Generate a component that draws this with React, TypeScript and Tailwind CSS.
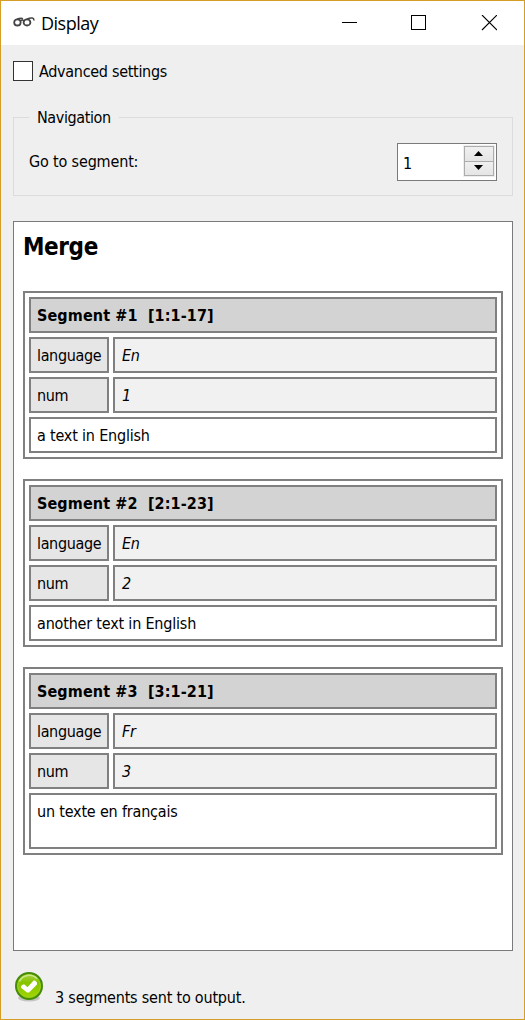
import React from 'react';

type Segment = {
  id: number;
  address: string;
  language: string;
  num: string;
  text: string;
  tall?: boolean;
};

const segments: Segment[] = [
  { id: 1, address: '[1:1-17]', language: 'En', num: '1', text: 'a text in English' },
  { id: 2, address: '[2:1-23]', language: 'En', num: '2', text: 'another text in English' },
  { id: 3, address: '[3:1-21]', language: 'Fr', num: '3', text: 'un texte en français', tall: true },
];

function TitleBar() {
  return (
    <header className="flex h-11 shrink-0 items-center bg-white">
      <svg className="ml-3 h-3 w-[22px] -translate-y-px" viewBox="0 0 22 12" fill="none" stroke="#444" strokeWidth="1.8">
        <ellipse cx="4.4" cy="6.4" rx="3.2" ry="3.1" />
        <ellipse cx="14" cy="6.4" rx="3.4" ry="3.1" />
        <path d="M4 3.2C6 2.4 8.5 2.2 10 2.6M7.6 5C8.6 3.8 9.8 3.8 10.8 5M13.8 3.2C16 2.2 18 1.8 19.4 2.1C20.6 2.4 21 3.2 21 4.6" strokeWidth="1.5" />
      </svg>
      <h1 className="ml-1.5 grow font-['Open_Sans',sans-serif] text-[18px] leading-6 tracking-[-0.5px] [font-stretch:normal]">Display</h1>
      <svg className="mr-[27px] h-4 w-[156px]" viewBox="0 0 156 16" fill="none" stroke="#000" shapeRendering="crispEdges">
        <path d="M1 7.5H16" />
        <rect x="70.5" y="0.5" width="14" height="14" />
        <path d="M141 0L156 15M156 0L141 15" shapeRendering="auto" strokeWidth="1.1" />
      </svg>
    </header>
  );
}

function SpinBox() {
  return (
    <div className="flex h-[38px] w-[100px] border border-[#7a7a7a] bg-white">
      <span className="grow pl-[5px] pt-2 leading-[24px]">1</span>
      <div className="mr-px mt-px flex h-8 w-8 flex-col border border-[#eeeeee]">
        <button className="flex h-4 items-center justify-center border border-[#acacac] bg-linear-to-b from-[#f0f0f0] to-[#e5e5e5]">
          <svg className="h-[5px] w-[9px] -translate-x-px -translate-y-px" viewBox="0 0 9 5"><path d="M0 5L4.5 0L9 5Z" /></svg>
        </button>
        <button className="-mt-px flex h-[15px] items-center justify-center border border-[#acacac] bg-linear-to-b from-[#f0f0f0] to-[#e5e5e5]">
          <svg className="h-[5px] w-[9px] -translate-x-px -translate-y-px" viewBox="0 0 9 5"><path d="M0 0L4.5 5L9 0Z" /></svg>
        </button>
      </div>
    </div>
  );
}

function Row({ label, value }: { label: string; value: string }) {
  return (
    <div className="flex h-9 gap-1">
      <div className="w-20 border-2 border-[#808080] bg-[#e6e6e6] pl-1.5 leading-[34px] tracking-[-0.35px]">{label}</div>
      <div className="grow border-2 border-[#808080] bg-[#f1f1f1] pl-[7px] leading-[34px] italic">{value}</div>
    </div>
  );
}

function SegmentTable({ segment }: { segment: Segment }) {
  return (
    <section className="flex flex-col gap-1 border-2 border-[#808080] p-1">
      <h3 className="h-9 border-2 border-[#808080] bg-[#d3d3d3] pl-1.5 font-bold leading-[34px] tracking-[0.12px] whitespace-pre">
        {`Segment #${segment.id}  ${segment.address}`}
      </h3>
      <Row label="language" value={segment.language} />
      <Row label="num" value={segment.num} />
      <div className={`border-2 border-[#808080] bg-white pl-1.5 leading-[34px] tracking-[-0.19px] ${segment.tall ? 'h-14' : 'h-9'}`}>{segment.text}</div>
    </section>
  );
}

function StatusIcon() {
  return (
    <svg className="h-[30px] w-7" viewBox="0 0 28 30">
      <defs>
        <linearGradient id="disc" x1="0" y1="0" x2="0" y2="1">
          <stop offset="0" stopColor="#a5cf3c" />
          <stop offset=".35" stopColor="#86c300" />
          <stop offset="1" stopColor="#a0d600" />
        </linearGradient>
      </defs>
      <ellipse cx="14" cy="26" rx="11" ry="3.5" fill="#000" opacity=".18" />
      <circle cx="14" cy="14" r="13" fill="#86c300" stroke="#458b08" strokeWidth="2" />
      <circle cx="14" cy="14" r="11.3" fill="url(#disc)" stroke="#9bd020" strokeWidth="1" />
      <path d="M4.3 9.5A10.8 10.8 0 0 1 22 6.8" fill="none" stroke="#cbe58c" strokeWidth="1.6" />
      <path d="M6 14L8 12.4H9.5L12.5 15.2L18.6 8.6H20L22 10.6V12.6L14 20.6H12L6 15.8Z" fill="#fff" />
    </svg>
  );
}

export default function App() {
  return (
    <main className="flex h-[1020px] w-[525px] flex-col border border-[#d69d29] bg-[#efefef] font-['DejaVu_Sans_Condensed','DejaVu_Sans',sans-serif] text-[16px] tracking-[-0.3px] text-black [font-stretch:condensed]">
      <TitleBar />
      <div className="flex grow flex-col px-3">
        <label className="mt-4 flex h-5 items-center">
          <span className="size-5 border border-[#333333] bg-white" />
          <span className="ml-1.5 mt-0.5 leading-5">Advanced settings</span>
        </label>
        <fieldset className="mt-6 h-[91px] w-[500px] border border-[#dcdcdc] pl-[15px] pr-[15px]">
          <legend className="h-6 px-2 leading-[26px] tracking-[-0.4px]">Navigation</legend>
          <div className="mt-3.5 flex items-start justify-between">
            <span className="mt-[7px] leading-6 tracking-[-0.16px]">Go to segment:</span>
            <SpinBox />
          </div>
        </fieldset>
        <div className="mt-[25px] h-[730px] w-[500px] border border-[#7a7a7a] bg-white px-[9px]">
          <h2 className="h-[69px] pt-[9px] text-[24px] font-bold leading-8 tracking-[-0.4px]">Merge</h2>
          <div className="flex flex-col gap-5">
            {segments.map((segment) => (
              <SegmentTable key={segment.id} segment={segment} />
            ))}
          </div>
        </div>
        <footer className="mt-[21px] flex">
          <span className="ml-0.5"><StatusIcon /></span>
          <span className="ml-3 mt-3.5 leading-6 tracking-[-0.2px]">3 segments sent to output.</span>
        </footer>
      </div>
    </main>
  );
}
